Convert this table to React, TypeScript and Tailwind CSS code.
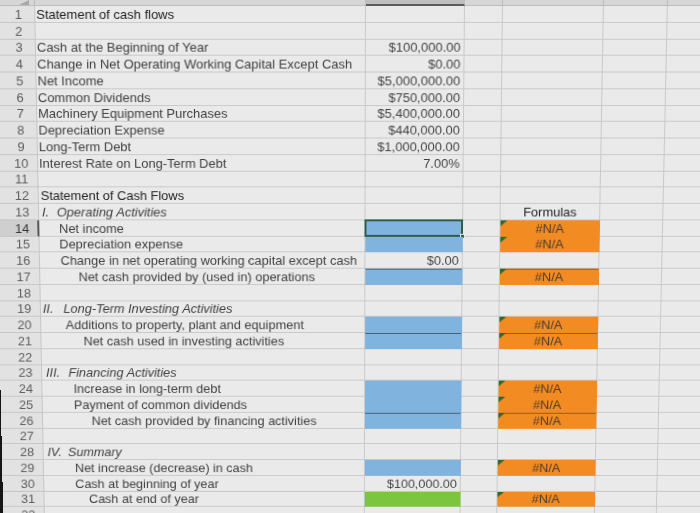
import React from 'react';

type Fill = 'blue' | 'green';
interface RowDef {
  n: number;
  label?: string;
  num?: string;
  numW?: string;
  pl?: string;
  dark?: boolean;
  b?: string;
  bFill?: Fill;
  bTop?: boolean;
  sel?: boolean;
  d?: string;
  dFill?: boolean;
  dTop?: boolean;
  dHead?: boolean;
}

const rows: RowDef[] = [
  { n: 1, label: 'Statement of cash flows', pl: 'pl-[1px]', dark: true },
  { n: 2 },
  { n: 3, label: 'Cash at the Beginning of Year', pl: 'pl-[1px]', b: '$100,000.00' },
  { n: 4, label: 'Change in Net Operating Working Capital Except Cash', pl: 'pl-[1px]', b: '$0.00' },
  { n: 5, label: 'Net Income', pl: 'pl-[1px]', b: '$5,000,000.00' },
  { n: 6, label: 'Common Dividends', pl: 'pl-[1px]', b: '$750,000.00' },
  { n: 7, label: 'Machinery Equipment Purchases', pl: 'pl-[1px]', b: '$5,400,000.00' },
  { n: 8, label: 'Depreciation Expense', pl: 'pl-[1px]', b: '$440,000.00' },
  { n: 9, label: 'Long-Term Debt', pl: 'pl-[1px]', b: '$1,000,000.00' },
  { n: 10, label: 'Interest Rate on Long-Term Debt', pl: 'pl-[1px]', b: '7.00%' },
  { n: 11 },
  { n: 12, label: 'Statement of Cash Flows', pl: 'pl-[2px]', dark: true },
  { n: 13, num: 'I.', numW: 'w-[15px]', label: 'Operating Activities', pl: 'pl-[3px]', d: 'Formulas', dHead: true },
  { n: 14, label: 'Net income', pl: 'pl-[20px]', bFill: 'blue', sel: true, d: '#N/A', dFill: true },
  { n: 15, label: 'Depreciation expense', pl: 'pl-[20px]', bFill: 'blue', d: '#N/A', dFill: true },
  { n: 16, label: 'Change in net operating working capital except cash', pl: 'pl-[21px]', b: '$0.00' },
  { n: 17, label: 'Net cash provided by (used in) operations', pl: 'pl-[39px]', bFill: 'blue', bTop: true, d: '#N/A', dFill: true, dTop: true },
  { n: 18 },
  { n: 19, num: 'II.', numW: 'w-[21px]', label: 'Long-Term Investing Activities', pl: 'pl-[2px]' },
  { n: 20, label: 'Additions to property, plant and equipment', pl: 'pl-[25px]', bFill: 'blue', d: '#N/A', dFill: true },
  { n: 21, label: 'Net cash used in investing activities', pl: 'pl-[43px]', bFill: 'blue', bTop: true, d: '#N/A', dFill: true, dTop: true },
  { n: 22 },
  { n: 23, num: 'III.', numW: 'w-[23px]', label: 'Financing Activities', pl: 'pl-[4px]' },
  { n: 24, label: 'Increase in long-term debt', pl: 'pl-[32px]', bFill: 'blue', d: '#N/A', dFill: true },
  { n: 25, label: 'Payment of common dividends', pl: 'pl-[32px]', bFill: 'blue', d: '#N/A', dFill: true },
  { n: 26, label: 'Net cash provided by financing activities', pl: 'pl-[50px]', bFill: 'blue', bTop: true, d: '#N/A', dFill: true, dTop: true },
  { n: 27 },
  { n: 28, num: 'IV.', numW: 'w-[21px]', label: 'Summary', pl: 'pl-[4px]' },
  { n: 29, label: 'Net increase (decrease) in cash', pl: 'pl-[32px]', bFill: 'blue', d: '#N/A', dFill: true },
  { n: 30, label: 'Cash at beginning of year', pl: 'pl-[32px]', b: '$100,000.00' },
  { n: 31, label: 'Cash at end of year', pl: 'pl-[46px]', bFill: 'green', d: '#N/A', dFill: true },
  { n: 32 },
  { n: 33 },
];

function Triangle() {
  return (
    <svg className="absolute left-0 top-0" width="7" height="6" viewBox="0 0 7 6">
      <path d="M0 0H7L0 6Z" fill="#2f6a2c" />
    </svg>
  );
}

function Row({ r }: { r: RowDef }) {
  const selRow = r.n === 14;
  const bCls =
    r.bFill === 'blue'
      ? 'bg-[#80b3de] border-[#80b3de]'
      : r.bFill === 'green'
      ? 'bg-[#7cc53e] border-[#7cc53e]'
      : 'border-[#c9c9c9]';
  const dCls = r.dFill ? 'bg-[#f28b22] border-[#f28b22]' : 'border-[#c9c9c9]';
  return (
    <div className="flex h-[16.75px]">
      <div
        className={
          selRow
            ? 'w-[43px] shrink-0 flex items-end justify-center pl-[10px] bg-[#cfcfcf] border-b border-r-2 border-b-[#c4c4c4] border-r-[#555555] text-[#333333]'
            : 'w-[43px] shrink-0 flex items-end justify-center pl-[10px] bg-[#e2e2e2] border-b border-r border-[#c6c6c6] text-[#5c5c5c]'
        }
      >
        <span className="leading-[15px]">{r.n}</span>
      </div>
      <div className={`w-[331px] shrink-0 flex items-end border-b border-r border-[#c9c9c9] whitespace-nowrap ${r.pl ?? ''} ${r.dark ? 'text-[#222222]' : 'text-[#404040]'}`}>
        {r.num ? (
          <span className="leading-[15px] italic flex">
            <span className={`inline-block ${r.numW}`}>{r.num}</span>
            <span>{r.label}</span>
          </span>
        ) : (
          <span className="leading-[15px]">{r.label}</span>
        )}
      </div>
      <div
        className={`relative w-[99px] shrink-0 flex items-end justify-end pr-[3px] border-b border-r text-[#444444] ${bCls} ${
          r.bTop ? 'shadow-[inset_0_1px_0_#3f5f70]' : ''
        }`}
      >
        <span className="leading-[15px]">{r.b}</span>
        {r.sel && (
          <>
            <div className="absolute -left-[1px] -top-[1px] -right-[1px] -bottom-[1px] border-2 border-[#2c5b48]" />
            <div className="absolute -right-[3px] -bottom-[3px] w-[5px] h-[5px] bg-[#2c5b48] border border-[#eaeaea]" />
          </>
        )}
      </div>
      <div className="w-[38px] shrink-0 border-b border-r border-[#c9c9c9]" />
      <div
        className={`relative w-[101px] shrink-0 flex items-end justify-center border-b border-r ${dCls} ${
          r.dTop ? 'shadow-[inset_0_1px_0_#9a5512]' : ''
        } ${r.dHead ? 'text-[#222222]' : 'text-[#4a3a2c]'}`}
      >
        {r.dFill && <Triangle />}
        <span className="leading-[15px]">{r.d}</span>
      </div>
      <div className="w-[64px] shrink-0 border-b border-r border-[#c9c9c9]" />
      <div className="w-[72px] shrink-0 border-b border-r border-[#c9c9c9]" />
    </div>
  );
}

export default function App() {
  return (
    <div className="w-[700px] h-[513px] overflow-hidden bg-[#161616]">
      <div className="-ml-2 w-[748px] origin-[338px_0px] [transform:perspective(1000px)_rotateX(-3.7deg)] bg-[#eaeaea] font-['Liberation_Sans',Arial,sans-serif] text-[13px]">
        <div className="flex h-[6px] bg-[#d6d6d6]">
          <div className="w-[43px] shrink-0 flex items-end justify-end pr-[5px] border-r border-b border-[#bdbdbd]">
            <svg width="10" height="5" viewBox="0 0 10 5">
              <path d="M10 0V5H0Z" fill="#a8a8a8" />
            </svg>
          </div>
          <div className="w-[331px] shrink-0 border-r border-b border-[#bdbdbd]" />
          <div className="w-[99px] shrink-0 bg-[#bfbfbf] border-r border-[#bdbdbd] border-b-2 border-b-[#5a5a5a]" />
          <div className="w-[38px] shrink-0 border-r border-b border-[#bdbdbd]" />
          <div className="w-[101px] shrink-0 border-r border-b border-[#bdbdbd]" />
          <div className="w-[64px] shrink-0 border-r border-b border-[#bdbdbd]" />
          <div className="w-[72px] shrink-0 border-r border-b border-[#bdbdbd]" />
        </div>
        {rows.map((r) => (
          <Row key={r.n} r={r} />
        ))}
      </div>
    </div>
  );
}
